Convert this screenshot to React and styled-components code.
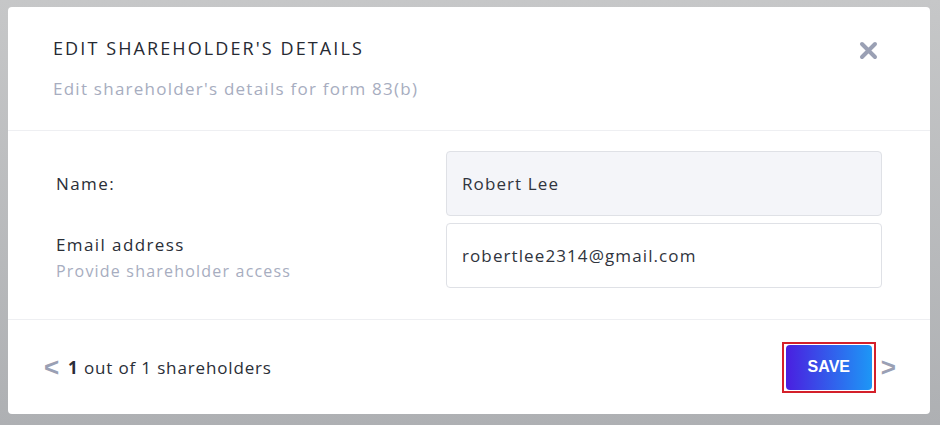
import styled, { createGlobalStyle } from "styled-components";

const GlobalStyle = createGlobalStyle`
  html, body {
    margin: 0;
    padding: 0;
    background: #b9bbbd;
  }
  body {
    font-family: "Open Sans", "Liberation Sans", sans-serif;
  }
`;

const Backdrop = styled.div`
  width: 940px;
  height: 425px;
  box-sizing: border-box;
  padding: 7px 10px 11px 8px;
  background: linear-gradient(#c6c7c8, #aeb0b3);
`;

const Modal = styled.div`
  background: #ffffff;
  border-radius: 4px;
  height: 100%;
  display: flex;
  flex-direction: column;
`;

const Header = styled.div`
  display: flex;
  justify-content: space-between;
  align-items: flex-start;
  padding: 29px 52px 0 45px;
  height: 124px;
  box-sizing: border-box;
  border-bottom: 1px solid #eeeff2;
`;

const Title = styled.h2`
  margin: 0;
  font-size: 18px;
  font-weight: 500;
  letter-spacing: 2.1px;
  color: #262a33;
`;

const Subtitle = styled.p`
  margin: 17px 0 0;
  font-size: 17px;
  letter-spacing: 1.25px;
  color: #a7adc0;
`;

const CloseButton = styled.button`
  border: none;
  background: none;
  padding: 0;
  margin-top: 5px;
  cursor: pointer;
  line-height: 0;
`;

const Body = styled.div`
  display: flex;
  flex-direction: column;
  gap: 7px;
  padding: 20px 48px 0 48px;
  height: 189px;
  box-sizing: border-box;
  border-bottom: 1px solid #eeeff2;
`;

const Row = styled.div`
  display: grid;
  grid-template-columns: 390px 436px;
  align-items: center;
  height: 65px;
`;

const LabelBlock = styled.div`
  display: flex;
  flex-direction: column;
  gap: 4px;
  padding-top: ${(p) => p.$pad || 0}px;
`;

const Label = styled.span`
  font-size: 17px;
  letter-spacing: 1.4px;
  color: #2a2e37;
`;

const Hint = styled.span`
  font-size: 16px;
  letter-spacing: 1.2px;
  color: #a7adc0;
`;

const Field = styled.div`
  height: 65px;
  box-sizing: border-box;
  border: 1px solid #dfe1e6;
  border-radius: 4px;
  background: ${(p) => (p.$filled ? "#f4f5f9" : "#ffffff")};
  display: flex;
  align-items: center;
  padding-left: 15px;
  font-size: 17px;
  letter-spacing: 1.1px;
  color: #30343d;
`;

const Footer = styled.div`
  flex: 1;
  display: flex;
  align-items: center;
  justify-content: space-between;
  padding: 0 34px 0 36px;
`;

const Pager = styled.div`
  display: flex;
  align-items: center;
  gap: 8px;
  font-size: 17px;
  letter-spacing: 0.85px;
  color: #2a2e37;
  b {
    font-weight: 700;
  }
`;

const Arrow = styled.span`
  color: #9aa0b4;
  font-size: 26px;
  font-weight: 700;
  font-family: "Liberation Sans", sans-serif;
  line-height: 1;
  margin-top: -1px;
`;

const Actions = styled.div`
  display: flex;
  align-items: center;
  gap: 5px;
`;

const Highlight = styled.div`
  border: 2px solid #d4202a;
  padding: 1px 2px;
  line-height: 0;
`;

const SaveButton = styled.button`
  width: 86px;
  height: 45px;
  border: none;
  border-radius: 4px;
  background: linear-gradient(90deg, #4a1fe0, #1d97f6);
  color: #ffffff;
  font-family: "Liberation Sans", sans-serif;
  font-weight: 700;
  font-size: 16px;
  cursor: pointer;
`;

export default function App() {
  return (
    <>
      <GlobalStyle />
      <Backdrop>
        <Modal>
          <Header>
            <div>
              <Title>EDIT SHAREHOLDER'S DETAILS</Title>
              <Subtitle>Edit shareholder's details for form 83(b)</Subtitle>
            </div>
            <CloseButton aria-label="close">
              <svg width="19" height="19" viewBox="0 0 19 19">
                <path
                  d="M3 3 L16 16 M16 3 L3 16"
                  stroke="#9aa0b4"
                  strokeWidth="4"
                  strokeLinecap="round"
                />
              </svg>
            </CloseButton>
          </Header>
          <Body>
            <Row>
              <LabelBlock>
                <Label>Name:</Label>
              </LabelBlock>
              <Field $filled>Robert Lee</Field>
            </Row>
            <Row>
              <LabelBlock $pad={4}>
                <Label>Email address</Label>
                <Hint>Provide shareholder access</Hint>
              </LabelBlock>
              <Field>robertlee2314@gmail.com</Field>
            </Row>
          </Body>
          <Footer>
            <Pager>
              <Arrow>&lt;</Arrow>
              <span>
                <b>1</b> out of 1 shareholders
              </span>
            </Pager>
            <Actions>
              <Highlight>
                <SaveButton>SAVE</SaveButton>
              </Highlight>
              <Arrow>&gt;</Arrow>
            </Actions>
          </Footer>
        </Modal>
      </Backdrop>
    </>
  );
}
